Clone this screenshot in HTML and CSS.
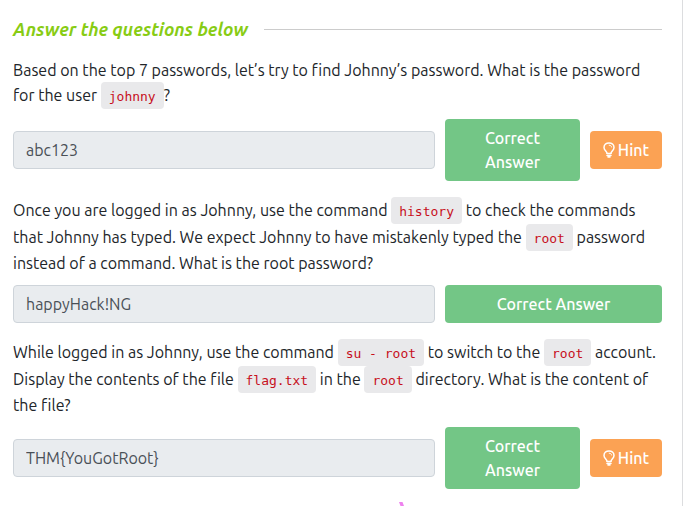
FILE: index.html
```html
<!DOCTYPE html>
<html lang="en">
<head>
<meta charset="utf-8">
<meta name="viewport" content="width=device-width, initial-scale=1">
<title>Answer the questions below</title>
<link rel="stylesheet" href="styles.css">
</head>
<body>
<svg class="symbols" aria-hidden="true">
  <symbol id="bulb" viewBox="0 0 12 16">
    <g fill="none" stroke="currentColor" stroke-linecap="round" stroke-linejoin="round">
      <path stroke-width="1.5" d="M4 11.2C3.9 9.2 1 8.4 1 5.4C1 2.7 3.300 .9 6 .9S11 2.700 11 5.400C11 8.400 8.100 9.200 8 11.200"/>
      <path stroke-width="1.500" d="M4 11.500H8M4 13.400H8M5 15.100H7"/>
      <path stroke-width="1" d="M6.200 3.200C7.500 3.200 8.500 4 8.600 5"/>
    </g>
  </symbol>
</svg>
<main class="task">
  <h1 class="heading">Answer the questions below</h1>

  <section class="question">
    <label class="text" for="answer-1">Based on the top 7 passwords, let’s try to find Johnny’s password. What is the password for the user <code>johnny</code>?</label>
    <div class="row">
      <input class="answer" id="answer-1" type="text" value="abc123" readonly>
      <div class="actions with-hint">
        <button class="btn correct" type="button">Correct Answer</button>
        <button class="btn hint" type="button"><svg class="icon" aria-hidden="true"><use href="#bulb"/></svg>Hint</button>
      </div>
    </div>
  </section>

  <section class="question">
    <label class="text" for="answer-2">Once you are logged in as Johnny, use the command <code>history</code> to check the commands that Johnny has typed. We expect Johnny to have mistakenly typed the <code>root</code> password instead of a command. What is the root password?</label>
    <div class="row">
      <input class="answer" id="answer-2" type="text" value="happyHack!NG" readonly>
      <div class="actions">
        <button class="btn correct" type="button">Correct Answer</button>
      </div>
    </div>
  </section>

  <section class="question">
    <label class="text" for="answer-3">While logged in as Johnny, use the command <code>su - root</code> to switch to the <code>root</code> account. Display the contents of the file <code>flag.txt</code> in the <code>root</code> directory. What is the content of the file?</label>
    <div class="row">
      <input class="answer" id="answer-3" type="text" value="THM{YouGotRoot}" readonly>
      <div class="actions with-hint">
        <button class="btn correct" type="button">Correct Answer</button>
        <button class="btn hint" type="button"><svg class="icon" aria-hidden="true"><use href="#bulb"/></svg>Hint</button>
      </div>
    </div>
  </section>
  <span class="mark"></span>
</main>
</body>
</html>
```
FILE: styles.css
```css
* { box-sizing: border-box; }

body {
  margin: 0;
  background: #fff;
  color: #212529;
  font: 16px/24px Ubuntu, "Noto Sans", sans-serif;
  font-variant-ligatures: none;
}

.symbols { display: none; }

.task {
  position: relative;
  display: flex;
  flex-direction: column;
  gap: 16px;
  min-height: 100vh;
  margin-right: 1px;
  padding: 16px 20px 17px 13px;
  border-right: 1px solid #dcdddf;
}

.heading {
  display: flex;
  align-items: center;
  gap: 16px;
  margin: 0;
  color: #88cc14;
  font-size: 18px;
  font-weight: 700;
  font-style: italic;
  line-height: 26px;
}

.heading::after {
  content: "";
  flex: 1;
  height: 1px;
  background: #ccc;
}

.text { display: block; }

code {
  display: inline-block;
  padding: 5px 8px 3px;
  border-radius: 4px;
  background: #e9e9eb;
  color: #c7101c;
  font: 13px/19px Consolas, "DejaVu Sans Mono", monospace;
}

.row {
  display: grid;
  grid-template-columns: 422fr 217fr;
  align-items: center;
  gap: 10px;
  margin-top: 10px;
}

.answer {
  width: 100%;
  height: 38px;
  padding: 6px 12px;
  border: 1px solid #ced4da;
  border-radius: 4px;
  background: #e9ecef;
  color: #495057;
  font: inherit;
}

.actions {
  display: flex;
  align-items: center;
  gap: 10px;
}

.btn {
  min-height: 38px;
  padding: 7px 12px;
  border: 0;
  border-radius: 4px;
  color: #fff;
  font: inherit;
  font-weight: 500;
}

.correct {
  flex: 1;
  background: #73c686;
}

.with-hint .correct { padding: 7px 32px; }

.hint {
  display: flex;
  align-items: center;
  justify-content: center;
  gap: 3px;
  flex: 0 0 72px;
  background: #fba254;
}

.icon {
  width: 12px;
  height: 16px;
}

.mark {
  position: absolute;
  bottom: 0;
  left: 399px;
  width: 5px;
  height: 4px;
  background: #ee82ee;
  clip-path: polygon(0 0, 70% 0, 100% 100%, 30% 100%);
}
```
